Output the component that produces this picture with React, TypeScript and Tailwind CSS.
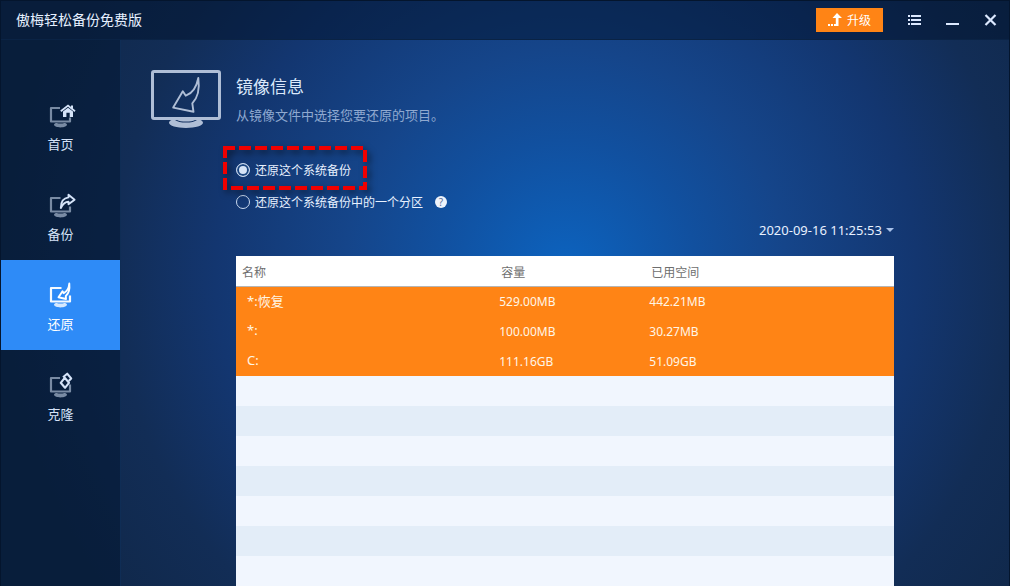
import { useState, type ReactNode } from "react";

const volumes = [
  { name: "*:恢复", size: "529.00MB", used: "442.21MB" },
  { name: "*:", size: "100.00MB", used: "30.27MB" },
  { name: "C:", size: "111.16GB", used: "51.09GB" },
];

const emptyRows = [0, 1, 2, 3, 4, 5, 6];

function NavMonitor({ frame, children }: { frame: string; children: ReactNode }) {
  return (
    <svg width="28" height="28" viewBox="-1 0 28 28" fill="none" className="overflow-visible" aria-hidden="true">
      <path
        d={frame}
        stroke="currentColor"
        strokeWidth="2.2"
        strokeLinejoin="round"
        className="opacity-55 group-aria-[current=page]:opacity-95"
      />
      <path
        d="M6 22.600c0-1 1.500-1.600 2.800-1.600 1.600.8 5.800.8 7.400 0 1.300 0 2.800.6 2.800 1.600 0 1.700-3 2.900-6.500 2.900S6 24.300 6 22.600z"
        fill="currentColor"
        className="opacity-55 group-aria-[current=page]:opacity-80"
      />
      {children}
    </svg>
  );
}

const navItems = [
  {
    id: "home",
    label: "首页",
    icon: (
      <NavMonitor frame="M12 6H3v13.500h19v-4">
        <path d="M12.800 9.300 20 3.600l7 5.700" stroke="currentColor" strokeWidth="1.800" />
        <path d="M23 3.500h2v4l-2-1.600z" fill="currentColor" />
        <path d="M15 9.600 20 5.700l5 3.900V15h-3.300v-4.300h-3.300V15H15z" fill="currentColor" />
      </NavMonitor>
    ),
  },
  {
    id: "backup",
    label: "备份",
    icon: (
      <NavMonitor frame="M12.500 6H3v13.500h19v-5">
        <path
          d="M20.500 2.800 26.600 7.700 20.500 12.300V9.800c-3.400 0-5.700 2-7.700 6.200 0-6 3-10 7.700-10.600z"
          stroke="currentColor"
          strokeWidth="1.900"
          strokeLinejoin="round"
        />
      </NavMonitor>
    ),
  },
  {
    id: "restore",
    label: "还原",
    icon: (
      <NavMonitor frame="M13.500 6H3v13.500h19v-6">
        <path
          d="M21.300 1.500c.6 5.500-.3 9.800-3.500 12.500l.2 3-7.500-1.700 4-6 1.200 1.900c3.200-1.700 5.200-5 5.600-9.700z"
          stroke="currentColor"
          strokeWidth="1.900"
          strokeLinejoin="round"
        />
      </NavMonitor>
    ),
  },
  {
    id: "clone",
    label: "克隆",
    icon: (
      <NavMonitor frame="M12 6H3v13.500h19v-7">
        <path d="M16.700 5.800 21 10.800 17 15.800 12.700 10.800z" stroke="currentColor" strokeWidth="2.100" strokeLinejoin="round" />
        <path d="M15 5.300 19.200 1.700 23.200 6.400 20.700 9" stroke="currentColor" strokeWidth="2.100" strokeLinejoin="round" />
      </NavMonitor>
    ),
  },
];

function RestoreMonitor() {
  return (
    <svg width="70" height="60" viewBox="0 0 70 60" fill="none" className="shrink-0 text-[#afbed6]" aria-hidden="true">
      <rect x="1.500" y="2.500" width="67" height="47" rx="1.500" stroke="currentColor" strokeWidth="3" />
      <path d="M24 51h-3.500c-1.500.8-2.500 1.700-2.500 2.800 0 3 7.600 5.200 17 5.200s17-2.200 17-5.200c0-1.100-1-2-2.500-2.800H46c-2 1.700-6 2.600-11 2.600S26 52.700 24 51z" fill="currentColor" />
      <path d="M26 51h18c-2 1-5 1.600-9 1.600s-7-.6-9-1.600z" fill="currentColor" />
      <path
        d="M47.300 9c1.500 11-.3 19.500-6 25.300l1.200 8.500-20.300-4.200 9.600-16.300 3 4.400c6.400-2.200 10.700-8.500 12.500-17.700z"
        stroke="currentColor"
        strokeWidth="1.900"
        strokeLinejoin="round"
      />
    </svg>
  );
}

function TitleBar() {
  return (
    <header className="flex h-[39px] items-center justify-between border-b border-[#0a2345] bg-[#00122b]/50 pr-3 pl-[15px]">
      <h1 className="text-sm text-[#e6f0ff]">傲梅轻松备份免费版</h1>
      <div className="flex items-center gap-6 text-[#dce9ff]">
        <button className="flex h-6 items-center gap-[5px] bg-[#ff8415] px-3 text-xs text-white">
          <svg width="14" height="14" viewBox="0 0 14 14" fill="currentColor" aria-hidden="true">
            <path d="M9 0 14 5h-3.500v8H6v-2h1.800V5H4.500z" />
            <path d="M0 11h2v2H0zM3 11h2v2H3z" />
          </svg>
          <span className="pt-0.5">升级</span>
        </button>
        <button aria-label="菜单">
          <svg width="14" height="14" viewBox="0 0 14 14" fill="currentColor" aria-hidden="true">
            <path d="M1 2h2v2H1zM4 2h10v2H4zM1 6h2v2H1zM4 6h10v2H4zM1 10h2v2H1zM4 10h10v2H4z" />
          </svg>
        </button>
        <button aria-label="最小化">
          <svg width="14" height="14" viewBox="0 0 14 14" fill="currentColor" aria-hidden="true">
            <path d="M1 10h13v2H1z" />
          </svg>
        </button>
        <button aria-label="关闭">
          <svg width="14" height="14" viewBox="0 0 14 14" stroke="currentColor" strokeWidth="2.200" aria-hidden="true">
            <path d="M2.500 2 12.500 12M12.500 2 2.500 12" />
          </svg>
        </button>
      </div>
    </header>
  );
}

const radioClass =
  "size-3.5 shrink-0 appearance-none rounded-full border border-[#c9d8ee] checked:bg-[#d6e3f6] checked:shadow-[inset_0_0_0_2px_#1b4681]";

export default function App() {
  const [page, setPage] = useState("restore");
  const [mode, setMode] = useState("system");

  return (
    <div className="flex min-h-screen flex-col border-x border-t border-[#04152d] bg-[radial-gradient(circle_at_56%_46%,#0c63bf_0px,#11509f_130px,#15458a_220px,#133670_350px,#122d56_450px,#10284a_560px)] font-['Noto_Sans','Noto_Sans_CJK_SC',sans-serif]">
      <TitleBar />
      <div className="flex flex-1">
        <nav className="w-[120px] shrink-0 border-r border-[#0f2d55] bg-[#00122b]/45 pt-10">
          {navItems.map((item) => (
            <button
              key={item.id}
              aria-current={page === item.id ? "page" : undefined}
              onClick={() => setPage(item.id)}
              className={`group flex h-[90px] w-full flex-col items-center pt-[22px] text-[13px] ${
                page === item.id ? "bg-[#2e8bf7] text-white" : "text-[#d5e3f8]"
              }`}
            >
              {item.icon}
              <span className="mt-1 leading-5">{item.label}</span>
            </button>
          ))}
        </nav>

        <main className="flex-1 pt-[29px] pr-[115px] pl-[30px]">
          <div className="flex gap-[15px]">
            <RestoreMonitor />
            <div className="pt-1.5">
              <h2 className="text-[17px] leading-6 text-[#dbe8fb]">镜像信息</h2>
              <p className="mt-1 text-[13px] leading-6 text-[#8fa9d0]">从镜像文件中选择您要还原的项目。</p>
            </div>
          </div>

          <div className="ml-[85px] flex flex-col">
            <div className="mt-[25px] flex flex-col items-start text-xs text-[#e8f1ff]">
              <label className="relative flex h-8 items-center gap-[5px]">
                <input type="radio" name="mode" className={radioClass} checked={mode === "system"} onChange={() => setMode("system")} />
                <span className="pt-0.5">还原这个系统备份</span>
                <svg className="pointer-events-none absolute -top-2.5 -left-3.5 h-12 w-[146px] overflow-visible drop-shadow-[3px_3px_3px_rgba(0,0,0,0.5)]" aria-hidden="true">
                  <rect x="3" y="4" width="140" height="40" fill="none" stroke="#f00000" strokeWidth="4" strokeDasharray="12 4" strokeDashoffset="2" />
                </svg>
              </label>
              <div className="flex items-center gap-3">
                <label className="flex h-8 items-center gap-[5px]">
                  <input type="radio" name="mode" className={radioClass} checked={mode === "partition"} onChange={() => setMode("partition")} />
                  <span className="pt-0.5">还原这个系统备份中的一个分区</span>
                </label>
                <button className="flex size-3 items-center justify-center rounded-full bg-[#eef3fb] text-[10px] leading-3 text-[#5c6f96]">
                  ?
                </button>
              </div>
            </div>

            <div className="mb-3 flex h-[26px] items-center justify-end gap-1">
              <select aria-label="备份时间" className="appearance-none bg-transparent text-[13px] text-[#e8f1ff]">
                <option>2020-09-16 11:25:53</option>
              </select>
              <svg width="8" height="6" viewBox="0 0 8 6" fill="#a9c2ea" aria-hidden="true">
                <path d="M0 0h8L4 4z" />
              </svg>
            </div>

            <table className="w-full table-fixed border-collapse text-left text-xs">
              <colgroup>
                <col className="w-[39.4%]" />
                <col className="w-[22.8%]" />
                <col />
              </colgroup>
              <thead>
                <tr className="h-[30px] border-b border-[#b5b5b5] bg-white text-[#6e6e6e]">
                  <th className="pt-1 pl-1.5 font-normal">名称</th>
                  <th className="pt-1 pl-1.5 font-normal">容量</th>
                  <th className="pt-1 pl-1.5 font-normal">已用空间</th>
                </tr>
              </thead>
              <tbody>
                {volumes.map((v) => (
                  <tr key={v.name} className="h-[30px] bg-[#ff8415] text-[#fff6e6]">
                    <td className="pl-[11px] text-[13px]">{v.name}</td>
                    <td className="pt-0.5 pl-1">{v.size}</td>
                    <td className="pt-0.5 pl-1">{v.used}</td>
                  </tr>
                ))}
                {emptyRows.map((row) => (
                  <tr key={row} className="h-[30px] bg-[#f1f6fe] odd:bg-[#e3edf8]">
                    <td colSpan={3}></td>
                  </tr>
                ))}
              </tbody>
            </table>
          </div>
        </main>
      </div>
    </div>
  );
}
